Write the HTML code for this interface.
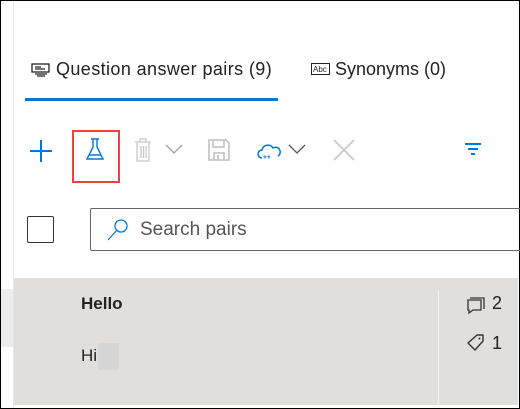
<!DOCTYPE html><html><head><style>
body{margin:0;width:520px;height:409px;overflow:hidden;background:#fff;font-family:"Liberation Sans",sans-serif;position:relative}
.a{position:absolute}
</style></head><body>
<div class="a" style="left:0;top:0;width:518px;height:407px;border:1px solid #000"></div>
<div class="a" style="left:13px;top:1px;width:1px;height:406px;background:#e6e6e6"></div>
<svg class="a" style="left:31px;top:63px" width="20" height="14" viewBox="0 0 20 14"><rect x="1" y="1" width="17" height="8" fill="none" stroke="#222" stroke-width="1.3"/><path d="M4 4h6M4 6h10M4 11h12M6 13h8" stroke="#222" stroke-width="1.2"/></svg>
<div class="a" style="left:56px;top:59px;font-size:18px;color:#222;letter-spacing:0.4px">Question answer pairs (9)</div>
<svg class="a" style="left:311px;top:63px" width="20" height="13" viewBox="0 0 20 13"><rect x="0.5" y="0.5" width="18" height="11" fill="none" stroke="#222"/><text x="2" y="9" font-size="8" font-family="Liberation Sans" fill="#222">Abc</text></svg>
<div class="a" style="left:335px;top:59px;font-size:18px;color:#222">Synonyms (0)</div>
<div class="a" style="left:25px;top:98px;width:253px;height:3px;background:#0078d4"></div>
<svg class="a" style="left:29px;top:139px" width="24" height="24"><path d="M12 1v22M1 12h22" stroke="#0078d4" stroke-width="2"/></svg>
<div class="a" style="left:72px;top:130px;width:44px;height:49px;border:2px solid #f04040"></div>
<svg class="a" style="left:84px;top:137px" width="22" height="25" viewBox="0 0 22 25"><path d="M7 2h8M9 2v8L3 22h16L13 10V2M5 18h12" fill="none" stroke="#0078d4" stroke-width="1.4"/></svg>
<svg class="a" style="left:133px;top:138px" width="20" height="24"><path d="M2 4h16M7 4V1h6v3M4 4v19h12V4M8 8v12M10.5 8v12M13 8v12" fill="none" stroke="#c8c8c8" stroke-width="1.3"/></svg>
<svg class="a" style="left:165px;top:144px" width="18" height="10"><path d="M1 1l8 8 8-8" fill="none" stroke="#a0a0a0" stroke-width="1.3"/></svg>
<svg class="a" style="left:208px;top:139px" width="22" height="22"><path d="M1 1h17l3 3v17H1z M5 1v7h11V1 M6 21v-7h10v7 M10 16v5" fill="none" stroke="#c8c8c8" stroke-width="1.8"/></svg>
<svg class="a" style="left:256px;top:143px" width="26" height="20"><path d="M6 15a4 4 0 0 1 0-8 6 6 0 0 1 11-2 4.5 4.5 0 0 1 5 8" fill="none" stroke="#0078d4" stroke-width="1.5"/><text x="7" y="19" font-size="10" fill="#0078d4" font-family="Liberation Sans">**</text></svg>
<svg class="a" style="left:288px;top:144px" width="18" height="10"><path d="M1 1l8 8 8-8" fill="none" stroke="#555" stroke-width="1.3"/></svg>
<svg class="a" style="left:333px;top:139px" width="22" height="22"><path d="M1 1l20 20M21 1L1 21" stroke="#c8c8c8" stroke-width="1.8"/></svg>
<svg class="a" style="left:464px;top:143px" width="18" height="14"><path d="M1 1h16M4 6h10M7 11h4" stroke="#0078d4" stroke-width="2"/></svg>
<div class="a" style="left:27px;top:216px;width:25px;height:25px;border:1px solid #333;border-radius:2px"></div>
<div class="a" style="left:90px;top:208px;width:440px;height:41px;border:1px solid #666;border-radius:2px"></div>
<svg class="a" style="left:106px;top:218px" width="24" height="30"><circle cx="15" cy="8" r="6" fill="none" stroke="#0078d4" stroke-width="1.3"/><path d="M11 12L2 22" stroke="#0078d4" stroke-width="1.2"/></svg>
<div class="a" style="left:140px;top:219px;font-size:19px;color:#555">Search pairs</div>
<div class="a" style="left:14px;top:278px;width:504px;height:127px;background:#e0dfde"></div>
<div class="a" style="left:1px;top:289px;width:12px;height:58px;background:#ececec"></div>
<div class="a" style="left:438px;top:291px;width:1px;height:114px;background:#f4f4f4"></div>
<div class="a" style="left:81px;top:294px;font-size:17px;font-weight:bold;color:#222">Hello</div>
<div class="a" style="left:98px;top:343px;width:21px;height:27px;background:#d6d6d6"></div>
<div class="a" style="left:81px;top:346px;font-size:17px;color:#222">Hi</div>
<svg class="a" style="left:466px;top:295px" width="20" height="20"><path d="M4 3h14v11M2 5h13v10H7l-4 3v-3H2z" fill="none" stroke="#333" stroke-width="1.3"/></svg>
<div class="a" style="left:492px;top:293px;font-size:18px;color:#222">2</div>
<svg class="a" style="left:466px;top:333px" width="20" height="20"><path d="M2 10l9-8h6v6l-8 9z" fill="none" stroke="#333" stroke-width="1.4" stroke-linejoin="round"/><circle cx="13.5" cy="5.5" r="1" fill="#333"/></svg>
<div class="a" style="left:492px;top:333px;font-size:18px;color:#222">1</div>
</body></html>
